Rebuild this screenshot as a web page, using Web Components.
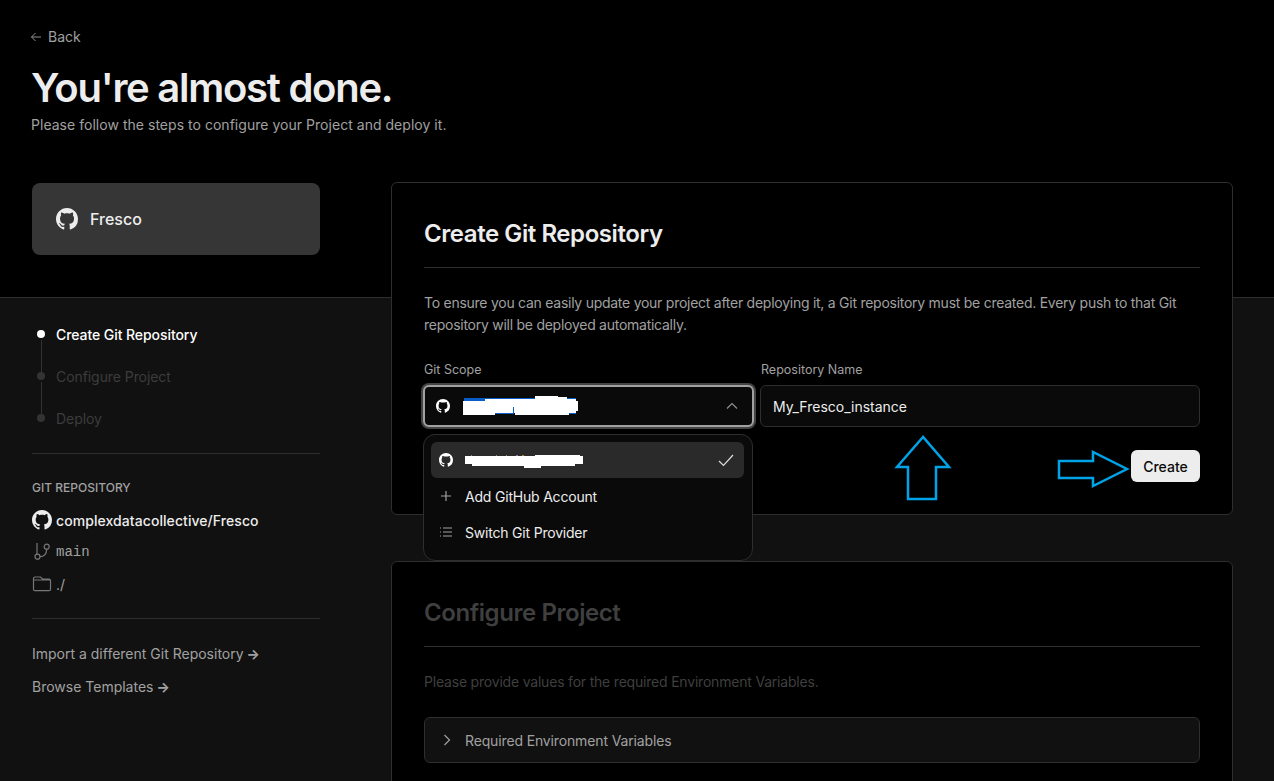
<!DOCTYPE html>
<html lang="en">
<head>
<meta charset="utf-8">
<title>You're almost done.</title>
<style>
  html, body { margin: 0; height: 781px; overflow: hidden; background: #111; }
  body { font-family: Inter, "Liberation Sans", sans-serif; color: #ededed; }
</style>
</head>
<body>
<deploy-page></deploy-page>
<script>
const GITHUB = `<path fill="currentColor" fill-rule="evenodd" d="M8 0C3.58 0 0 3.58 0 8c0 3.54 2.29 6.53 5.47 7.59.4.07.55-.17.55-.38 0-.19-.01-.82-.01-1.49-2.01.37-2.53-.49-2.69-.94-.09-.23-.48-.94-.82-1.13-.28-.15-.68-.52-.01-.53.63-.01 1.08.58 1.23.82.72 1.21 1.87.87 2.33.66.07-.52.28-.87.51-1.07-1.78-.2-3.64-.89-3.64-3.95 0-.87.31-1.59.82-2.15-.08-.2-.36-1.02.08-2.12 0 0 .67-.21 2.2.82.64-.18 1.32-.27 2-.27s1.36.09 2 .27c1.53-1.04 2.2-.82 2.2-.82.44 1.1.16 1.92.08 2.12.51.56.82 1.27.82 2.15 0 3.07-1.87 3.75-3.65 3.95.29.25.54.73.54 1.48 0 1.07-.01 1.93-.01 2.2 0 .21.15.46.55.38A8.01 8.01 0 0 0 16 8c0-4.42-3.58-8-8-8z"/>`

const github = size => `<svg width="${size}" height="${size}" viewBox="0 0 16 16" aria-hidden="true">${GITHUB}</svg>`

class StepList extends HTMLElement {
  constructor () {
    super()
    this.attachShadow({ mode: 'open' })
  }

  connectedCallback () {
    this.shadowRoot.innerHTML = /* html */`
      <style>
        :host { display: block; }
        ol { list-style: none; margin: 0; padding: 0; }
        li { display: flex; align-items: center; height: 42px; gap: 11px; color: #3c3c3c; font-size: 14px; letter-spacing: -.07px; position: relative; }
        li::before { content: ''; width: 8px; height: 8px; margin-left: 5px; border-radius: 50%; background: #333; flex: none; }
        li:not(:last-child)::after { content: ''; position: absolute; left: 9px; top: 27px; height: 32px; width: 1px; background: #333; }
        li.on { color: #fff; font-weight: 500; }
        li.on::before { background: #fff; }
      </style>
      <ol>
        <li class="on">Create Git Repository</li>
        <li>Configure Project</li>
        <li>Deploy</li>
      </ol>
    `
  }
}

class RepoInfo extends HTMLElement {
  constructor () {
    super()
    this.attachShadow({ mode: 'open' })
  }

  connectedCallback () {
    this.shadowRoot.innerHTML = /* html */`
      <style>
        :host { display: block; font-size: 14px; }
        h4 { margin: 0 0 8px; font-size: 12px; line-height: 16px; font-weight: 500; color: #a1a1a1; }
        .row { display: flex; align-items: center; height: 32px; gap: 4px; color: #a1a1a1; }
        .row svg { flex: none; }
        .name { color: #ededed; font-weight: 500; letter-spacing: .07px; }
        .mono { font-family: "Liberation Mono", monospace; font-size: 14px; }
      </style>
      <h4>GIT REPOSITORY</h4>
      <div class="row name">${github(20)}<span>complexdatacollective/Fresco</span></div>
      <div class="row mono">
        <svg width="20" height="20" viewBox="0 0 20 20" fill="none" stroke="#777" stroke-width="1.2"><circle cx="5.500" cy="14.700" r="2.500"/><circle cx="14.700" cy="4.700" r="2.500"/><path d="M5 12.200V1M8 14.700c4 0 6.500-3 6.700-7.500"/></svg>
        <span>main</span>
      </div>
      <div class="row">
        <svg width="20" height="20" viewBox="0 0 20 20" fill="none" stroke="#777" stroke-width="1.2"><path d="M1.500 6V4.500C1.500 3.600 2.200 3 3 3h5.500l2 2H17c.9 0 1.500.7 1.500 1.500v8.700c0 .9-.6 1.500-1.500 1.500H3c-.8 0-1.500-.6-1.500-1.500V6H18.500"/></svg>
        <span>./</span>
      </div>
    `
  }
}

class SideLink extends HTMLElement {
  constructor () {
    super()
    this.attachShadow({ mode: 'open' })
  }

  connectedCallback () {
    this.shadowRoot.innerHTML = /* html */`
      <style>
        :host { display: block; font-size: 14px; line-height: 20px; color: #a1a1a1; margin-bottom: 13px; }
        b { font-weight: 700; margin-left: -1px; }
      </style>
      <slot></slot> <b>&rarr;</b>
    `
  }
}

class GitMenu extends HTMLElement {
  constructor () {
    super()
    this.attachShadow({ mode: 'open' })
  }

  connectedCallback () {
    this.shadowRoot.innerHTML = /* html */`
      <style>
        :host { position: absolute; left: -1px; top: 72px; width: 330px; box-sizing: border-box; height: 127px; padding: 7px 8px 7px 7px; background: #0a0a0a; border: 1px solid #2e2e2e; border-radius: 12px; z-index: 2; font-size: 14px; letter-spacing: -.2px; color: #ededed; }
        .item { display: flex; align-items: center; height: 36px; gap: 12px; padding: 0 8px; border-radius: 6px; }
        .item svg { flex: none; }
        .sel { background: #2a2a2a; color: #fff; position: relative; padding-right: 10px; }
        .sel .check { margin-left: auto; color: #ddd; }
        .ic { width: 14px; height: 14px; color: #a1a1a1; }
      </style>
      <div class="item sel">
        ${github(14)}
        <svg style="margin-top:3px" width="118" height="13" viewBox="0 0 118 13"><path fill="#fff" d="M0 1H70V0H115V1H118V9H110V11H76V13H59V11H7V9H0Z"/><path fill="#b98a3c" d="M41 0h1v1h-1zM57 0h2v1h-2z"/><path fill="#888" d="M6 0h1v1H6zM31 0h1v1h-1zM51 0h2v1h-2z"/></svg>
        <svg class="check" width="16" height="16" viewBox="0 0 16 16" fill="none" stroke="currentColor" stroke-width="1.200"><path d="M1 9l4.500 4.500L15 3"/></svg>
      </div>
      <div class="item">
        <svg class="ic" viewBox="0 0 14 14" fill="none" stroke="currentColor" stroke-width="1.200"><path d="M7 2v10M2 7h10"/></svg>
        <span>Add GitHub Account</span>
      </div>
      <div class="item">
        <svg class="ic" viewBox="0 0 14 14" fill="none" stroke="currentColor" stroke-width="1.100"><path d="M4 3h9M4 7h9M4 11h9"/><path stroke-dasharray="1 1" d="M1 3h1M1 7h1M1 11h1"/></svg>
        <span>Switch Git Provider</span>
      </div>
    `
  }
}

class RepoForm extends HTMLElement {
  constructor () {
    super()
    this.attachShadow({ mode: 'open' })
  }

  connectedCallback () {
    this.shadowRoot.innerHTML = /* html */`
      <style>
        :host { display: block; position: relative; font-size: 14px; }
        .grid { display: grid; grid-template-columns: 330px 1fr; gap: 6px; }
        label { display: block; color: #a1a1a1; font-size: 12.500px; line-height: 16px; margin-bottom: 7px; }
        .box { box-sizing: border-box; height: 42px; background: #0a0a0a; border: 1px solid #2e2e2e; border-radius: 6px; display: flex; align-items: center; color: #ededed; }
        .name { padding: 0 12px; }
        .name-label { padding-left: 1px; }
        .scope { margin-left: -1px; border: 2px solid #a1a1a1; box-shadow: 0 0 0 2px #444; padding: 0 14px 0 11px; gap: 13px; color: #fff; }
        .chev { margin-left: auto; }
        .actions { display: flex; justify-content: flex-end; padding-top: 23px; }
        button { font: inherit; font-weight: 500; height: 32px; width: 69px; padding: 0; border: 0; border-radius: 6px; background: #ededed; color: #0a0a0a; }
        .mark { position: absolute; z-index: 1; }
      </style>
      <div class="grid">
        <div>
          <label>Git Scope</label>
          <div class="box scope">
            ${github(14)}
            <svg width="116" height="20" viewBox="0 0 116 20"><path fill="#fff" d="M0 5H22V3H72V0H95V1H104V3H113V5H115V15H113V17H106V19H52V17H32V19H0Z"/><path fill="#0a5cc7" d="M1 2H22V5H1ZM22 2H72V3H22ZM104 2H113V3H104ZM32 17H51V18H32ZM106 17H113V18H106ZM50 11h1v6h-1z"/></svg>
            <svg class="chev" width="12" height="12" viewBox="0 0 12 12" fill="none" stroke="#8f8f8f" stroke-width="1.200"><path d="M1 8.500l5-5 5 5"/></svg>
          </div>
        </div>
        <div>
          <label class="name-label">Repository Name</label>
          <div class="box name">My_Fresco_instance</div>
        </div>
      </div>
      <div class="actions"><button>Create</button></div>
      <git-menu></git-menu>
      <svg class="mark" style="left:469px;top:72px" width="60" height="68" viewBox="0 0 60 68" fill="none" stroke="#00a2e8" stroke-width="2.500"><path d="M30 3L4 33h11v32h28V33h13z"/></svg>
      <svg class="mark" style="left:632px;top:87px" width="74" height="40" viewBox="0 0 74 40" fill="none" stroke="#00a2e8" stroke-width="2.500"><path d="M3 12h34V3l34 17-34 17v-8H3z"/></svg>
    `
  }
}

class StepCard extends HTMLElement {
  constructor () {
    super()
    this.attachShadow({ mode: 'open' })
  }

  connectedCallback () {
    const dim = this.hasAttribute('dim')
    this.shadowRoot.innerHTML = /* html */`
      <style>
        :host { display: block; box-sizing: border-box; background: #000; border: 1px solid #2e2e2e; border-radius: 6px; padding: 33px 32px 32px; }
        h2 { margin: 0; font-size: 24px; line-height: 36px; font-weight: 600; letter-spacing: -.43px; color: ${dim ? '#3f3f3f' : '#ededed'}; padding-bottom: 15px; border-bottom: 1px solid #2e2e2e; }
        .body { padding-top: 24px; }
      </style>
      <h2>${this.getAttribute('heading')}</h2>
      <div class="body"><slot></slot></div>
    `
  }
}

class DeployPage extends HTMLElement {
  constructor () {
    super()
    this.attachShadow({ mode: 'open' })
  }

  connectedCallback () {
    this.shadowRoot.innerHTML = /* html */`
      <style>
        :host { display: block; height: 781px; overflow: hidden; }
        header { box-sizing: border-box; height: 298px; background: #000; border-bottom: 1px solid #2e2e2e; padding: 28px 31px 0; }
        .back { display: flex; align-items: center; gap: 3px; font-size: 14px; line-height: 18px; color: #a1a1a1; }
        h1 { margin: 18px 0 0; font-size: 40px; line-height: 48px; font-weight: 600; letter-spacing: -1.27px; color: #ededed; }
        .sub { margin: 3px 0 0; font-size: 14px; line-height: 20px; letter-spacing: .03px; color: #a1a1a1; }
        .project { box-sizing: border-box; width: 288px; height: 72px; margin: 48px 0 0 1px; padding: 0 24px; background: #363636; border-radius: 8px; display: flex; align-items: center; gap: 12px; font-size: 16px; font-weight: 500; color: #ededed; }
        .main { display: flex; padding: 0 41px 0 32px; }
        aside { box-sizing: border-box; width: 288px; flex: none; padding-top: 15px; }
        hr { margin: 0; border: 0; border-top: 1px solid #2e2e2e; }
        repo-info { margin: 26px 0 0; }
        .links { padding-top: 25px; }
        .cards { flex: 1; margin: -116px 0 0 71px; display: flex; flex-direction: column; gap: 46px; min-width: 0; }
        p { margin: 0; font-size: 14px; line-height: 22px; letter-spacing: -.2px; color: #a1a1a1; }
        .lead { margin-bottom: 26px; letter-spacing: -.26px; }
        .dim { color: #3f3f3f; margin-bottom: 24px; }
        .env { box-sizing: border-box; height: 46px; display: flex; align-items: center; gap: 12px; padding: 0 16px; background: #111; border: 1px solid #2e2e2e; border-radius: 6px; font-size: 14px; letter-spacing: -.14px; color: #a1a1a1; }
      </style>
      <header>
        <div class="back">
          <svg width="14" height="14" viewBox="0 0 14 14" fill="none" stroke="#8f8f8f" stroke-width="1"><path d="M10 7H.5M4.500 3L.5 7l4 4"/></svg>
          <span>Back</span>
        </div>
        <h1>You're almost done.</h1>
        <div class="sub">Please follow the steps to configure your Project and deploy it.</div>
        <div class="project">${github(22)}<span>Fresco</span></div>
      </header>
      <div class="main">
        <aside>
          <step-list></step-list>
          <hr style="margin-top:14px">
          <repo-info></repo-info>
          <hr style="margin-top:18px">
          <div class="links">
            <side-link>Import a different Git Repository</side-link>
            <side-link>Browse Templates</side-link>
          </div>
        </aside>
        <div class="cards">
          <step-card heading="Create Git Repository">
            <p class="lead">To ensure you can easily update your project after deploying it, a Git repository must be created. Every push to that Git repository will be deployed automatically.</p>
            <repo-form></repo-form>
          </step-card>
          <step-card heading="Configure Project" dim>
            <p class="dim">Please provide values for the required Environment Variables.</p>
            <div class="env">
              <svg width="12" height="12" viewBox="0 0 12 12" fill="none" stroke="#a1a1a1" stroke-width="1.200"><path d="M3.500 1l5 5-5 5"/></svg>
              <span>Required Environment Variables</span>
            </div>
          </step-card>
        </div>
      </div>
    `
  }
}

customElements.define('step-list', StepList)
customElements.define('repo-info', RepoInfo)
customElements.define('side-link', SideLink)
customElements.define('git-menu', GitMenu)
customElements.define('repo-form', RepoForm)
customElements.define('step-card', StepCard)
customElements.define('deploy-page', DeployPage)
</script>
</body>
</html>
